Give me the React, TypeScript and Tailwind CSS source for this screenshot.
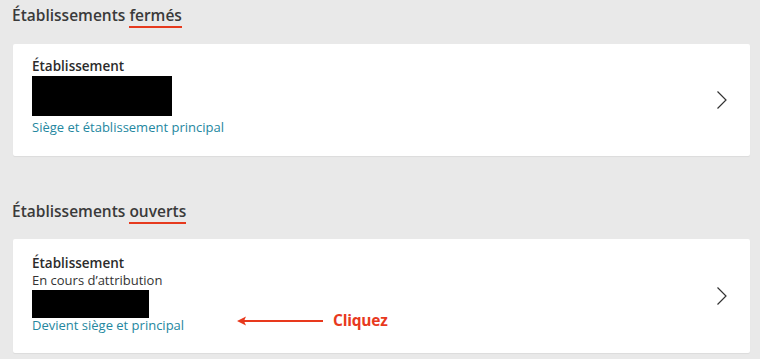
const font = { fontFamily: '"Open Sans", "Liberation Sans", sans-serif' };

function Heading({ lead, mark }: { lead: string; mark: string }) {
  return (
    <h2 className="pl-3 text-[15.5px] font-semibold leading-5 text-[#3a3a3a]">
      {lead}{" "}
      <span className="inline-block border-b-[2.5px] border-[#e63a1e] leading-[21px]">{mark}</span>
    </h2>
  );
}

function Chevron() {
  return (
    <svg width="12" height="20" viewBox="0 0 12 20" className="shrink-0">
      <polyline points="1.5,1.5 10,10 1.5,18.5" fill="none" stroke="#333" strokeWidth="1.2" />
    </svg>
  );
}

function Card({ children, className, pad }: { children: React.ReactNode; className: string; pad: string }) {
  return (
    <div className={`relative ml-[13px] mr-[10px] flex items-stretch justify-between rounded-[2px] bg-white pl-[19px] pr-[22px] shadow-[0_1px_1px_rgba(0,0,0,0.06)] ${className}`}>
      <div className={`flex flex-col ${pad}`}>{children}</div>
      <div className="flex items-center">
        <Chevron />
      </div>
    </div>
  );
}

export default function App() {
  return (
    <main style={font} className="relative h-[359px] w-[760px] overflow-hidden bg-[#e9e9e9] pt-[5px]">
      <Heading lead="Établissements" mark="fermés" />

      <Card className="mt-[16px] h-[112px]" pad="pt-[14px]">
        <p className="text-[13.5px] font-semibold leading-4 text-[#2b2b2b]">Établissement</p>
        <div className="mt-[2px] h-[40px] w-[140px] bg-black" />
        <p className="mt-[3px] text-[13px] leading-4 text-[#2487a0]">Siège et établissement principal</p>
      </Card>

      <div className="mt-[45px]">
        <Heading lead="Établissements" mark="ouverts" />
      </div>

      <Card className="mt-[15px] h-[114px]" pad="pt-[16px]">
        <p className="text-[13.5px] font-semibold leading-4 text-[#2b2b2b]">Établissement</p>
        <p className="mt-[1px] text-[13px] leading-4 text-[#333]">En cours d’attribution</p>
        <div className="mt-[2px] h-[28px] w-[117px] bg-black" />
        <p className="mt-[-1px] text-[13px] leading-4 text-[#2487a0]">Devient siège et principal</p>
        <div className="absolute left-[224px] top-[70px] flex items-center">
          <svg width="88" height="12" viewBox="0 0 88 12">
            <line x1="4" y1="6" x2="86" y2="6" stroke="#e8391d" strokeWidth="2" />
            <path d="M0 6 L9 1.5 L7 6 L9 10.5 Z" fill="#e8391d" />
          </svg>
          <span className="ml-[8px] text-[15.5px] font-bold tracking-[-0.2px] text-[#e8391d]">Cliquez</span>
        </div>
      </Card>
    </main>
  );
}
